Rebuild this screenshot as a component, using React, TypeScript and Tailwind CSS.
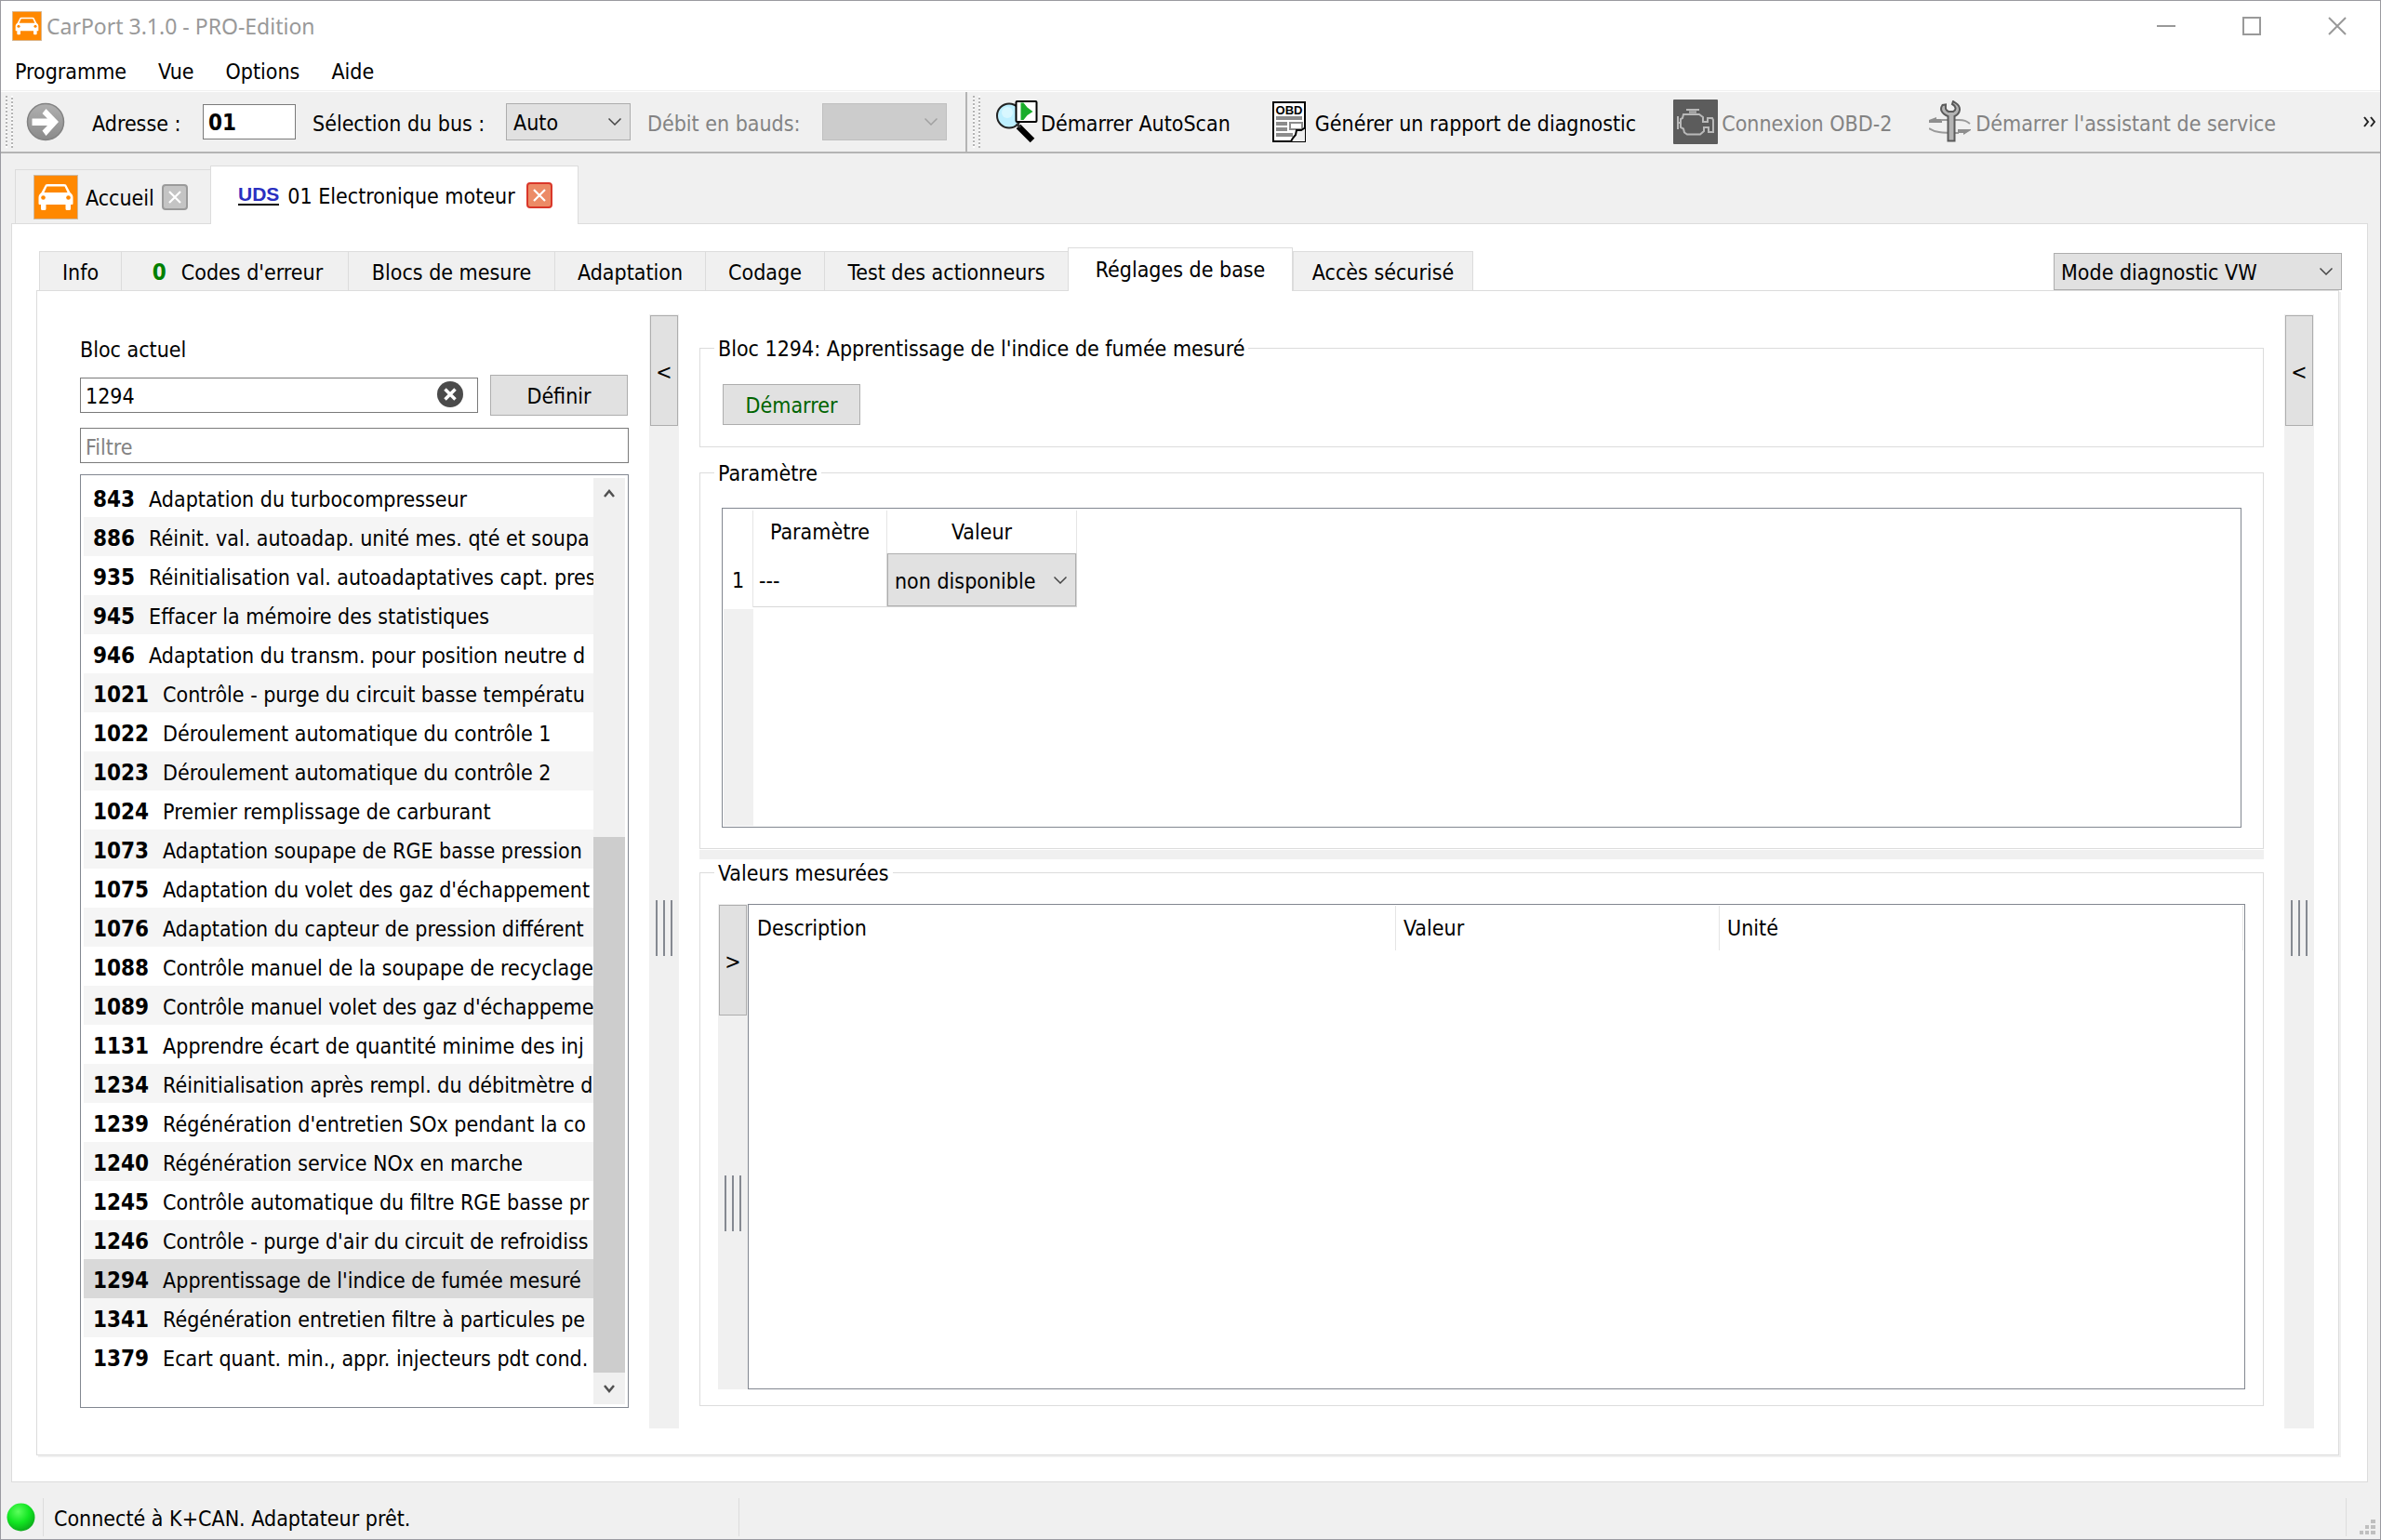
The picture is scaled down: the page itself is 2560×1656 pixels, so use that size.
import React, { useState } from "react";

const BLOCKS: [string, string][] = [
  ["843", "Adaptation du turbocompresseur"],
  ["886", "Réinit. val. autoadap. unité mes. qté et soupa"],
  ["935", "Réinitialisation val. autoadaptatives capt. pres"],
  ["945", "Effacer la mémoire des statistiques"],
  ["946", "Adaptation du transm. pour position neutre d"],
  ["1021", "Contrôle - purge du circuit basse températu"],
  ["1022", "Déroulement automatique du contrôle 1"],
  ["1023", "Déroulement automatique du contrôle 2"],
  ["1024", "Premier remplissage de carburant"],
  ["1073", "Adaptation soupape de RGE basse pression"],
  ["1075", "Adaptation du volet des gaz d'échappement"],
  ["1076", "Adaptation du capteur de pression différent"],
  ["1088", "Contrôle manuel de la soupape de recyclage"],
  ["1089", "Contrôle manuel volet des gaz d'échappeme"],
  ["1131", "Apprendre écart de quantité minime des inj"],
  ["1234", "Réinitialisation après rempl. du débitmètre d"],
  ["1239", "Régénération d'entretien SOx pendant la co"],
  ["1240", "Régénération service NOx en marche"],
  ["1245", "Contrôle automatique du filtre RGE basse pr"],
  ["1246", "Contrôle - purge d'air du circuit de refroidiss"],
  ["1294", "Apprentissage de l'indice de fumée mesuré"],
  ["1341", "Régénération entretien filtre à particules pe"],
  ["1379", "Ecart quant. min., appr. injecteurs pdt cond."],
];

const TABS: [string, string][] = [
  ["Info", "min-w-[88px]"],
  ["Codes d'erreur", "min-w-[244px]"],
  ["Blocs de mesure", "min-w-[222px]"],
  ["Adaptation", "min-w-[162px]"],
  ["Codage", "min-w-[128px]"],
  ["Test des actionneurs", "min-w-[262px]"],
  ["Réglages de base", "min-w-[242px]"],
  ["Accès sécurisé", "min-w-[194px]"],
];

function CarIcon({ className }: { className: string }) {
  return (
    <svg className={className} viewBox="0 0 48 48" aria-hidden="true">
      <rect x="0.5" y="0.5" width="47" height="47" fill="#ff8800" stroke="#cdbba4" />
      <path
        fill="#fff"
        fillRule="evenodd"
        d="M13 10.5 15 10h18l2 .5 4.500 8.500c2 1.500 3 3 3 5.500v6.500q0 1-1 1H6.500q-1 0-1-1V24.500c0-2.500 1-4 3-5.500zM14.500 12.500 11.500 19h25l-3-6.500z"
      />
      <path fill="#fff" d="M8 31h5.500v5.500q0 1.500-1.500 1.500H9.500Q8 38 8 36.500zM34.500 31H40v5.500q0 1.500-1.500 1.500H36q-1.500 0-1.500-1.500z" />
      <circle cx="10.500" cy="24.500" r="2.300" fill="#ff8800" />
      <circle cx="37.500" cy="24.500" r="2.300" fill="#ff8800" />
    </svg>
  );
}

function ArrowIcon() {
  return (
    <svg className="size-[42px]" viewBox="0 0 42 42" aria-hidden="true">
      <defs>
        <linearGradient id="arrowFill" x1="0" y1="0" x2="0" y2="1">
          <stop offset="0" stopColor="#b0b0b0" />
          <stop offset="1" stopColor="#8a8a8a" />
        </linearGradient>
      </defs>
      <circle cx="21" cy="21" r="19.500" fill="url(#arrowFill)" stroke="#828282" strokeWidth="1.500" />
      <path fill="#fff" d="M6.500 17.500H23L17.500 12l4-5L35 21 21.500 36l-4-5.500L23 25H6.500z" />
    </svg>
  );
}

function ScanIcon() {
  return (
    <svg className="size-[46px]" viewBox="0 0 46 46" aria-hidden="true">
      <circle cx="15" cy="16.500" r="13" fill="#bdefff" stroke="#222" strokeWidth="2" />
      <circle cx="13" cy="13" r="6" fill="#d8f7ff" />
      <path d="M25 28l15 15" stroke="#000" strokeWidth="6.500" />
      <path d="M23 25l4 4" stroke="#333" strokeWidth="3" />
      <rect x="22.500" y="1" width="22" height="22" rx="1" fill="#fff" stroke="#000" strokeWidth="2" />
      <path d="M27.500 2.500h3l4 5 6 4.500-6 4-4 5h-3z" fill="#19ad2b" />
    </svg>
  );
}

function ReportIcon() {
  return (
    <svg className="h-[44px] w-[36px]" viewBox="0 0 36 44" aria-hidden="true">
      <rect x="1" y="1" width="34" height="42" fill="#fff" stroke="#000" strokeWidth="2" />
      <text x="18" y="13.500" textAnchor="middle" fontFamily="Liberation Sans" fontSize="13" fontWeight="700">OBD</text>
      <g fill="#8c8c8c">
        <rect x="4" y="16" width="28" height="4" />
        <rect x="4" y="22" width="12" height="4" />
        <rect x="4" y="28" width="12" height="4" />
        <rect x="4" y="34" width="18" height="4" />
      </g>
      <rect x="19" y="23" width="13" height="7" fill="#fff" stroke="#8c8c8c" strokeWidth="2" />
      <path d="M35 28.500l-10 3v5l-5 6.500h15z" fill="#eee" />
      <path d="M35 28.500l-4 2.500h-5l-1 5-3 3.500-2 3.500" fill="none" stroke="#000" strokeWidth="2" />
    </svg>
  );
}

function EngineIcon() {
  return (
    <svg className="size-[48px]" viewBox="0 0 48 48" aria-hidden="true">
      <rect width="48" height="48" rx="1" fill="#5c5c5c" />
      <g fill="none" stroke="#b9b9b9" strokeWidth="2">
        <path d="M14 11h14M17 13.500h8" />
        <path d="M15 16h13l4 3v5h5v-4h5l1 2v13h-5v-5h-5v4l-4 3.500H15l-3-2-1-4-3-1.500v-9l2-1 1-4z" />
        <path d="M5 18v14M5 25h3" />
      </g>
    </svg>
  );
}

function WrenchIcon() {
  return (
    <svg className="size-[46px]" viewBox="0 0 46 46" aria-hidden="true">
      <path d="M0 21l8-3v2h6v4H0z" fill="#8e8e8e" />
      <path d="M13 21h19c6 0 8 1 12 4M0 30c6 4 12 5 32 5" fill="none" stroke="#9a9a9a" strokeWidth="2" />
      <path d="M45 32l-8 5v-2h-6v-4h14z" fill="#8e8e8e" />
      <path
        d="M14.500 5C11.500 9 13 14 20.500 17v26.500h7V17C34 14 35 7 29 3l-3-2-1 3c4 2 5 6 1 8h-5c-4-2-3-4-3-7.500z"
        fill="#b4b4b4"
        stroke="#5a5a5a"
        strokeWidth="2"
      />
    </svg>
  );
}

function CloseTab({ active, label }: { active: boolean; label: string }) {
  return (
    <button
      aria-label={label}
      className={
        active
          ? "flex size-[28px] items-center justify-center rounded-[4px] border-2 border-[#d9372a] bg-[#ec8b66]"
          : "flex size-[28px] items-center justify-center rounded-[4px] border-2 border-[#9a9a9a] bg-[#c4c4c4]"
      }
    >
      <svg className="size-[24px]" viewBox="0 0 24 24" aria-hidden="true">
        <path d="M6 6l12 12M18 6L6 18" stroke="#fff" strokeWidth="2.200" />
      </svg>
    </button>
  );
}

function Chevron({ className }: { className: string }) {
  return (
    <svg className={className} viewBox="0 0 14 10" aria-hidden="true">
      <path d="M0.500 1.500L7 8l6.500-6.500" fill="none" stroke="currentColor" strokeWidth="1.500" />
    </svg>
  );
}

function Select({ id, label, options, width, disabled }: { id: string; label?: string; options: string[]; width: string; disabled?: boolean }) {
  return (
    <div className={"relative " + width}>
      <select
        id={id}
        aria-label={label}
        disabled={disabled}
        className="size-full appearance-none border border-[#adadad] bg-[#e1e1e1] pt-[2px] pl-[7px] text-black disabled:border-[#bfbfbf] disabled:bg-[#cccccc] disabled:opacity-100"
      >
        {options.map((o) => (
          <option key={o}>{o}</option>
        ))}
      </select>
      <Chevron
        className={
          disabled
            ? "pointer-events-none absolute top-1/2 right-[10px] h-[10px] w-[14px] -translate-y-1/2 text-[#a0a0a0]"
            : "pointer-events-none absolute top-1/2 right-[10px] h-[10px] w-[14px] -translate-y-1/2 text-[#444]"
        }
      />
    </div>
  );
}

function Handle() {
  return (
    <div className="flex h-[56px] gap-[4px]">
      <div className="w-[2px] bg-[repeating-linear-gradient(180deg,#b4b4b4_0_2px,#fff_2px_4px)]" />
      <div className="w-[2px] bg-[repeating-linear-gradient(180deg,#fff_0_2px,#b4b4b4_2px_4px)]" />
    </div>
  );
}

function Splitter({ glyph, label }: { glyph: string; label: string }) {
  return (
    <div className="relative flex w-[32px] shrink-0 flex-col bg-[#f0f0f0] p-px">
      <button aria-label={label} className="h-[119px] border border-[#adadad] bg-[#e1e1e1] pt-[2px]">
        {glyph}
      </button>
      <div className="absolute inset-x-0 top-[630px] flex h-[60px] justify-center gap-[6px]">
        <div className="w-[2px] bg-[#858991]" />
        <div className="w-[2px] bg-[#858991]" />
        <div className="w-[2px] bg-[#858991]" />
      </div>
    </div>
  );
}

function TitleBar() {
  return (
    <header className="flex h-[54px] items-center pl-[12px] font-['Noto_Sans','Open_Sans',sans-serif] text-[#999]">
      <CarIcon className="size-[32px]" />
      <h1 className="ml-[5px] flex-1">CarPort 3.1.0 - PRO-Edition</h1>
      <div className="flex">
        <button aria-label="Réduire" className="flex h-[54px] w-[92px] items-center justify-center">
          <svg className="size-[20px]" viewBox="0 0 20 20"><path d="M0 10h20" stroke="#999" strokeWidth="2" /></svg>
        </button>
        <button aria-label="Agrandir" className="flex h-[54px] w-[92px] items-center justify-center">
          <svg className="size-[20px]" viewBox="0 0 20 20"><rect x="1" y="1" width="18" height="18" fill="none" stroke="#999" strokeWidth="2" /></svg>
        </button>
        <button aria-label="Fermer" className="flex h-[54px] w-[92px] items-center justify-center">
          <svg className="size-[20px]" viewBox="0 0 20 20"><path d="M1 1l18 18M19 1L1 19" stroke="#999" strokeWidth="2" /></svg>
        </button>
      </div>
    </header>
  );
}

function Toolbar() {
  return (
    <div className="mt-px flex h-[66px] border-b-2 border-[#b4b4b4] bg-[#f0f0f0]">
      <div className="flex w-[1039px] items-center border-r-2 border-[#b4b4b4] pl-[5px]">
        <Handle />
        <button aria-label="Ouvrir" className="ml-[14px]"><ArrowIcon /></button>
        <label htmlFor="adresse" className="ml-[29px] w-[119px] pt-[3px] whitespace-nowrap">Adresse :</label>
        <input id="adresse" defaultValue="01" className="h-[38px] w-[100px] border border-[#7a7a7a] bg-white pt-[2px] pl-[5px] text-[24px] font-bold" />
        <label htmlFor="bus" className="ml-[18px] w-[208px] pt-[3px] whitespace-nowrap">Sélection du bus :</label>
        <Select id="bus" options={["Auto"]} width="h-[40px] w-[134px]" />
        <label htmlFor="bauds" className="ml-[18px] w-[188px] pt-[3px] whitespace-nowrap text-[#838383]">Débit en bauds:</label>
        <Select id="bauds" options={[""]} width="h-[40px] w-[134px]" disabled />
      </div>
      <div className="flex flex-1 items-center pl-[6px]">
        <Handle />
        <button className="ml-[16px] flex items-center gap-[3px] whitespace-nowrap"><ScanIcon /><span className="pt-[3px]">Démarrer AutoScan</span></button>
        <button className="ml-[45px] flex items-center gap-[10px] whitespace-nowrap"><ReportIcon /><span className="pt-[3px]">Générer un rapport de diagnostic</span></button>
        <button disabled className="ml-[40px] flex items-center gap-[4px] whitespace-nowrap text-[#838383]"><EngineIcon /><span className="pt-[3px]">Connexion OBD-2</span></button>
        <button disabled className="ml-[40px] flex items-center gap-[4px] whitespace-nowrap text-[#838383]"><WrenchIcon /><span className="pt-[3px]">Démarrer l'assistant de service</span></button>
        <button aria-label="Plus" className="mr-[5px] ml-auto">
          <svg className="h-[12px] w-[13px]" viewBox="0 0 13 12"><path d="M1 1l4 5-4 5M8 1l4 5-4 5" fill="none" stroke="#222" strokeWidth="2" /></svg>
        </button>
      </div>
    </div>
  );
}

function BlockList() {
  const [sel, setSel] = useState("1294");
  return (
    <div className="mt-[12px] flex flex-1 border border-[#828790] p-[3px]">
      <ul className="min-w-0 flex-1">
        {BLOCKS.map(([n, d], i) => (
          <li key={n}>
            <button
              onClick={() => setSel(n)}
              className={
                "flex h-[42px] w-full items-center gap-[15px] overflow-hidden pt-[3px] pl-[10px] text-left whitespace-nowrap " +
                (n === sel ? "bg-[#d9d9d9]" : i % 2 ? "bg-[#f5f5f5]" : "bg-white")
              }
            >
              <b className="text-[24px]">{n}</b>
              <span>{d}</span>
            </button>
          </li>
        ))}
      </ul>
      <div className="flex w-[34px] flex-col bg-[#f0f0f0]">
        <button aria-label="Défiler vers le haut" className="flex h-[34px] items-center justify-center">
          <svg className="h-[10px] w-[12px]" viewBox="0 0 12 10"><path d="M1 8l5-6 5 6" fill="none" stroke="#505050" strokeWidth="2.500" /></svg>
        </button>
        <div className="flex-[352]" />
        <div className="flex-[576] bg-[#cdcdcd]" />
        <button aria-label="Défiler vers le bas" className="flex h-[34px] items-center justify-center">
          <svg className="h-[10px] w-[12px]" viewBox="0 0 12 10"><path d="M1 2l5 6 5-6" fill="none" stroke="#505050" strokeWidth="2.500" /></svg>
        </button>
      </div>
    </div>
  );
}

function LeftPane() {
  return (
    <div className="flex w-[590px] shrink-0 flex-col pt-[20px] pb-[22px]">
      <label htmlFor="bloc" className="h-[36px] leading-[36px]">Bloc actuel</label>
      <div className="mt-[9px] flex items-center gap-[13px] pr-px">
        <div className="relative flex-1">
          <input id="bloc" defaultValue="1294" className="h-[38px] w-full border border-[#7a7a7a] pt-[2px] pl-[5px]" />
          <button aria-label="Effacer" className="absolute top-[4px] right-[16px]">
            <svg className="size-[28px]" viewBox="0 0 28 28">
              <circle cx="14" cy="14" r="14" fill="#4b4b4b" />
              <path d="M8.500 8.500l11 11M19.500 8.500l-11 11" stroke="#fff" strokeWidth="3.500" />
            </svg>
          </button>
        </div>
        <button className="h-[44px] w-[148px] border border-[#adadad] bg-[#e1e1e1] pt-[2px]">Définir</button>
      </div>
      <input aria-label="Filtre" placeholder="Filtre" className="mt-[13px] h-[38px] border border-[#7a7a7a] pt-[3px] pl-[5px] placeholder:text-[#838383] placeholder:opacity-100" />
      <BlockList />
    </div>
  );
}

function ParamTable() {
  return (
    <div className="mr-[23px] ml-[8px] flex h-[344px] flex-col border border-[#828790] pt-[2px] pl-px">
      <table className="w-[380px] table-fixed border-separate border-spacing-0">
        <thead>
          <tr className="h-[46px]">
            <th className="w-[32px] border-r border-[#e5e5e5]" />
            <th className="w-[144px] border-r border-[#e5e5e5] font-normal">Paramètre</th>
            <th className="border-r border-[#e5e5e5] font-normal">Valeur</th>
          </tr>
        </thead>
        <tbody>
          <tr className="h-[58px]">
            <th className="border-r border-[#e5e5e5] font-normal">1</th>
            <td className="border-r border-b border-[#d8d8d8] pl-[6px]">---</td>
            <td className="border-r border-b border-[#d8d8d8] p-0">
              <Select id="valeur" label="Valeur" options={["non disponible"]} width="h-[57px] w-full" />
            </td>
          </tr>
        </tbody>
      </table>
      <div className="mt-[2px] mb-px w-[32px] flex-1 bg-[#f0f0f0]" />
    </div>
  );
}

function MeasuredValues() {
  return (
    <div className="mr-[19px] ml-[4px] flex flex-1">
      <div className="relative flex w-[32px] flex-col bg-[#f0f0f0] p-px">
        <button aria-label="Déplier" className="h-[119px] border border-[#adadad] bg-[#e1e1e1] pt-[2px]">&gt;</button>
        <div className="absolute inset-x-0 top-[292px] flex h-[60px] justify-center gap-[6px]">
          <div className="w-[2px] bg-[#858991]" />
          <div className="w-[2px] bg-[#858991]" />
          <div className="w-[2px] bg-[#858991]" />
        </div>
      </div>
      <div className="flex-1 border border-[#828790] pt-px pr-px">
        <table className="w-full table-fixed border-separate border-spacing-0 text-left">
          <thead>
            <tr className="h-[48px]">
              <th className="border-r border-[#e5e5e5] pl-[9px] font-normal">Description</th>
              <th className="w-[348px] border-r border-[#e5e5e5] pl-[8px] font-normal">Valeur</th>
              <th className="w-[563px] border-r border-[#e5e5e5] pl-[8px] font-normal">Unité</th>
            </tr>
          </thead>
        </table>
      </div>
    </div>
  );
}

function Group({ title, className, children }: { title: string; className: string; children: React.ReactNode }) {
  return (
    <fieldset className={"flex min-w-0 flex-col border border-[#dcdcdc] pl-[15px] " + className}>
      <legend className="px-[4px] pt-[2px] leading-[26px]">{title}</legend>
      {children}
    </fieldset>
  );
}

export default function App() {
  const [tab, setTab] = useState(6);
  return (
    <div className="flex min-h-screen flex-col border border-[#9a9aa0] bg-white font-['DejaVu_Sans_Condensed','Noto_Sans',sans-serif] text-[23px] leading-[30px] text-black">
      <TitleBar />
      <nav className="flex h-[43px] items-center gap-[34px] border-b border-[#f0f0f0] pt-[2px] pl-[15px]">
        {["Programme", "Vue", "Options", "Aide"].map((m) => (
          <button key={m}>{m}</button>
        ))}
      </nav>
      <Toolbar />
      <main className="flex flex-1 flex-col bg-[#f0f0f0] pr-[13px] pl-[11px]">
        <div className="flex h-[75px] items-end pl-[4px]">
          <div className="flex h-[58px] w-[210px] items-center border-t border-l border-[#dcdcdc] pl-[19px]">
            <CarIcon className="size-[48px]" />
            <button className="ml-[8px] w-[82px] pt-[2px] text-left">Accueil</button>
            <CloseTab active={false} label="Fermer Accueil" />
          </div>
          <div className="relative z-10 -mb-px flex h-[63px] w-[396px] items-center border-x border-t border-[#dcdcdc] bg-white pl-[29px]">
            <span className="border-b-2 border-black font-['Liberation_Sans',sans-serif] text-[21px] leading-[20px] font-bold text-[#2a2fc0]">UDS</span>
            <button className="ml-[9px] w-[257px] pt-[2px] text-left whitespace-nowrap">01 Electronique moteur</button>
            <CloseTab active label="Fermer 01 Electronique moteur" />
          </div>
        </div>
        <section className="flex flex-1 flex-col border border-[#dcdcdc] bg-white pr-[27px] pb-[28px] pl-[26px]">
          <div className="flex h-[71px] items-end">
            <div role="tablist" className="flex items-end pl-[3px]">
              {TABS.map(([t, w], i) => (
                <button
                  key={t}
                  role="tab"
                  aria-selected={i === tab}
                  onClick={() => setTab(i)}
                  className={
                    "border-t border-l border-[#dcdcdc] whitespace-nowrap last:border-r " +
                    w +
                    (i === tab ? " relative z-10 -mb-px h-[47px] border-r bg-white" : " h-[42px] bg-[#f0f0f0] pt-[2px]")
                  }
                >
                  {i === 1 && <b className="mr-[16px] ml-[6px] text-[24px] text-[#008000]">0</b>}
                  {t}
                </button>
              ))}
            </div>
            <div className="ml-auto">
              <Select id="mode" label="Mode diagnostic" options={["Mode diagnostic VW"]} width="h-[40px] w-[310px]" />
            </div>
          </div>
          <div className="mr-[3px] flex flex-1 border border-[#dcdcdc] pt-[25px] pr-[26px] pb-[28px] pl-[46px] shadow-[2px_2px_0_#f0f0f0]">
            <LeftPane />
            <div className="ml-[22px] flex"><Splitter glyph="<" label="Replier la liste" /></div>
            <div className="mx-[22px] flex min-w-0 flex-1 flex-col pt-[22px] pb-[24px]">
              <Group title="Bloc 1294: Apprentissage de l'indice de fumée mesuré" className="pt-[25px] pb-[23px]">
                <button className="ml-[9px] h-[44px] w-[148px] border border-[#adadad] bg-[#e1e1e1] pt-[2px] text-[#006400]">Démarrer</button>
              </Group>
              <Group title="Paramètre" className="mt-[13px] pt-[24px] pb-[22px]">
                <ParamTable />
              </Group>
              <div className="mt-px h-[10px] bg-[#f0f0f0]" />
              <Group title="Valeurs mesurées" className="flex-1 pt-[20px] pb-[17px]">
                <MeasuredValues />
              </Group>
            </div>
            <Splitter glyph="<" label="Replier le panneau" />
          </div>
        </section>
      </main>
      <footer className="flex h-[61px] items-center bg-[#f0f0f0] pt-[14px] pl-[6px]">
        <svg className="size-[31px]" viewBox="0 0 31 31" aria-hidden="true">
          <defs>
            <radialGradient id="led" cx="0.4" cy="0.3" r="0.8">
              <stop offset="0" stopColor="#5cff5c" />
              <stop offset="0.5" stopColor="#12e622" />
              <stop offset="1" stopColor="#0a9a18" />
            </radialGradient>
          </defs>
          <circle cx="15.500" cy="15.500" r="15" fill="url(#led)" />
        </svg>
        <p className="ml-[8px] flex h-[41px] w-[749px] items-center border-x border-[#dcdcdc] pt-[2px] pl-[11px]">Connecté à K+CAN. Adaptateur prêt.</p>
        <div className="mr-[4px] ml-auto flex h-[41px] items-end border-l border-[#dcdcdc] pl-[14px]">
          <svg className="size-[18px]" viewBox="0 0 18 18" aria-hidden="true">
            <path d="M12 0h5v4h-5zM6 6h4v4H6zM12 6h5v4h-5zM0 12h4v4H0zM6 12h4v4H6zM12 12h5v4h-5z" fill="#bfbfbf" />
          </svg>
        </div>
      </footer>
    </div>
  );
}
